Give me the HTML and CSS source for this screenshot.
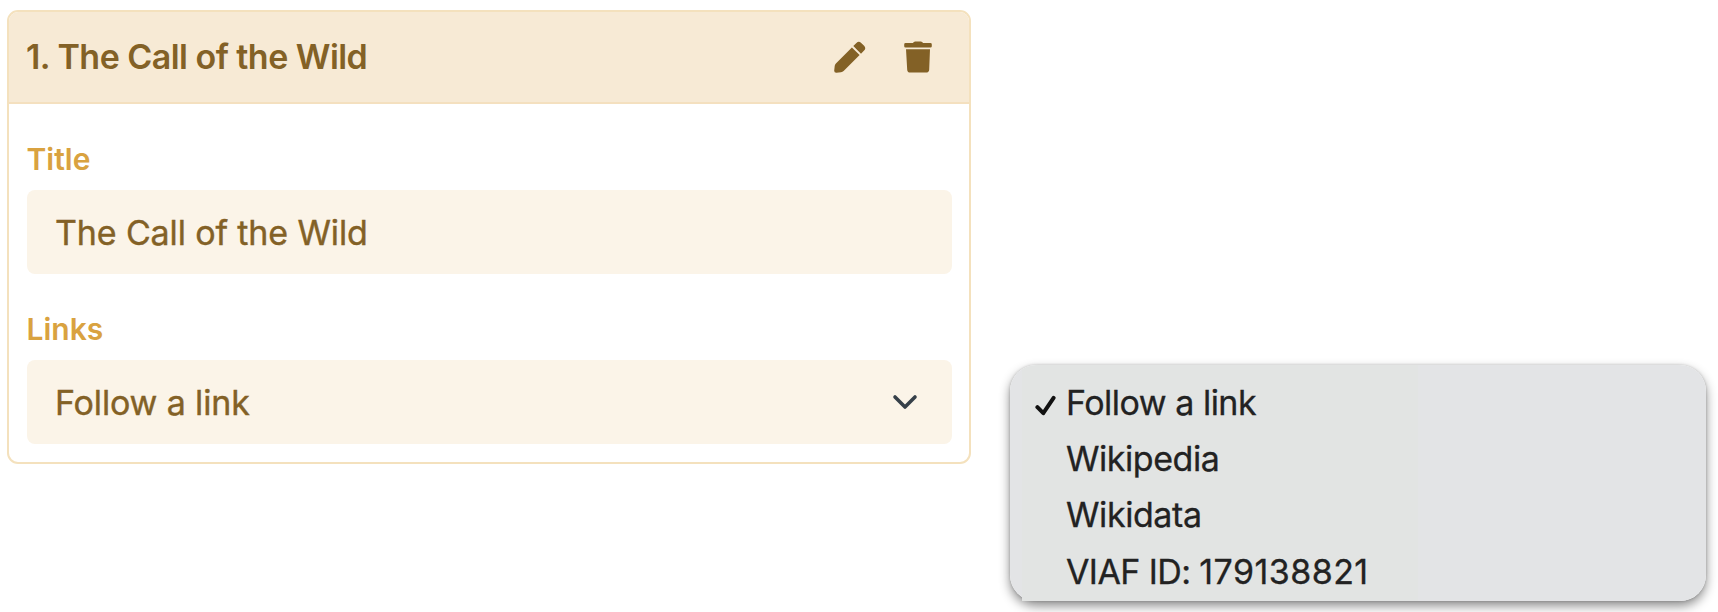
FILE: index.html
```html
<!DOCTYPE html>
<html lang="en">
<head>
<meta charset="utf-8">
<title>The Call of the Wild</title>
<link rel="stylesheet" href="styles.css">
</head>
<body>
<main class="page">
  <section class="card">
    <header class="card-header">
      <h2 class="card-title">1. The Call of the Wild</h2>
      <div class="actions">
        <svg class="icon-pencil" viewBox="0 0 32 32" width="32" height="32"><path d="M17.9 6.4 1.9 22.4Q.8 23.5.7 25L.2 29.6Q.1 31.9 2.4 31.8L7 31.3Q8.5 31.1 9.6 30L25.6 14.1ZM19.3 5 22.4 1.9Q24.8-.4 27.2 1.9L30.1 4.8Q32.4 7.2 30.1 9.6L27 12.7Z"/></svg>
        <svg class="icon-trash" viewBox="0 0 28 32" width="28" height="32"><path d="M9 2Q9.5.4 11.2.4H16.8Q18.5.4 19 2H26.4Q27.8 2 27.8 3.4V5.2Q27.8 6.6 26.4 6.6H1.6Q.2 6.6.2 5.2V3.4Q.2 2 1.6 2ZM2 8.2H26L25.2 28.8Q25 31.6 22 31.6H6Q3.4 31.6 3.2 28.8Z"/></svg>
      </div>
    </header>
    <div class="card-body">
      <label class="label label-title">Title</label>
      <div class="field"><span class="value value-title">The Call of the Wild</span></div>
      <label class="label label-links">Links</label>
      <div class="field">
        <span class="value value-select">Follow a link</span>
        <svg class="chevron" viewBox="0 0 26 16" width="26" height="16"><path d="M3 3 13 13 23 3"/></svg>
      </div>
    </div>
  </section>
  <ul class="menu">
    <li class="option"><svg class="check" viewBox="0 0 22 22" width="22" height="22"><path d="M2.4 12.2 8.3 18.2 18.6 2.9"/></svg><span class="option-follow">Follow a link</span></li>
    <li class="option"><span class="option-pedia">Wikipedia</span></li>
    <li class="option"><span class="option-data">Wikidata</span></li>
    <li class="option"><span class="option-viaf">VIAF ID: <span class="digits">179138821</span></span></li>
  </ul>
</main>
</body>
</html>
```

FILE: styles.css
```css
* { box-sizing: border-box; }
body { margin: 0; background: #fff; font-family: Inter, "Liberation Sans", sans-serif; }
.page { display: flex; align-items: flex-start; width: 1718px; height: 612px; padding: 10px 0 0 7px; overflow: hidden; }

.card { width: 964px; height: 454px; border: 2px solid #f4e1bd; border-radius: 11px; background: #fff; overflow: hidden; }
.card-header { display: flex; align-items: center; justify-content: space-between; height: 92px; padding: 0 37px 0 17px; background: #f7ead5; border-bottom: 2px solid #f4e0bf; }
.card-title { margin: 0; font-size: 34px; font-weight: 600; letter-spacing: -.54px; line-height: 40px; color: #836126; white-space: nowrap; }
.actions { display: flex; align-items: center; gap: 38px; fill: #836126; }
.card-body { display: flex; flex-direction: column; padding: 0 17.5px; }

.label { height: 86px; padding-top: 37px; font-size: 30px; font-weight: 600; line-height: 36px; color: #d9a240; }
.field { display: flex; align-items: center; justify-content: space-between; height: 84px; padding: 0 33.5px 0 28.5px; border-radius: 8px; background: #fbf4e8; }
.value { padding-top: 1px; font-size: 34px; line-height: 40px; color: #836126; white-space: nowrap; -webkit-text-stroke: .4px #836126; }
.value-title { letter-spacing: -.13px; }
.value-select { letter-spacing: -.15px; }
.chevron path { fill: none; stroke: #364049; stroke-width: 3.6; stroke-linecap: round; stroke-linejoin: round; }

.menu { position: relative; width: 696px; height: 236px; margin: 355px 0 0 39px; padding: 9.5px 0 0 34px; list-style: none; border-radius: 26px; background: linear-gradient(90deg, #e3e4e6 12px, #e2e4e3 12px, #e2e4e3 408px, #e3e4e6 408px); box-shadow: 0 5px 11px rgba(0, 0, 0, .45), 0 0 3px rgba(0, 0, 0, .2); }
/* squared-off lower left corner of the menu */
.menu::before { content: ""; position: absolute; left: 12px; bottom: 0; width: 20px; height: 20px; background: #e2e4e3; }
.option { display: flex; align-items: center; height: 56.4px; padding-left: 22px; font-size: 34px; line-height: 40px; color: #222; white-space: nowrap; -webkit-text-stroke: .3px #222; }
.option-follow { letter-spacing: -.5px; }
.option-pedia { letter-spacing: -.45px; }
.option-data { letter-spacing: -.42px; }
.option-viaf { letter-spacing: -.6px; }
.digits { letter-spacing: .45px; }
.check { margin: 6px 9px 0 -31px; }
.check path { fill: none; stroke: #111; stroke-width: 4; stroke-linecap: round; stroke-linejoin: round; }
```
